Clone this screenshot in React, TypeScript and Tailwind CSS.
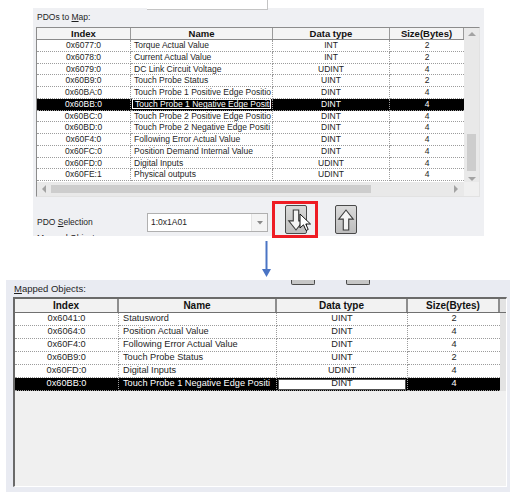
import React from 'react';

type Obj = { index: string; name: string; type: string; size: string };

const pdos: Obj[] = [
  { index: '0x6077:0', name: 'Torque Actual Value', type: 'INT', size: '2' },
  { index: '0x6078:0', name: 'Current Actual Value', type: 'INT', size: '2' },
  { index: '0x6079:0', name: 'DC Link Circuit Voltage', type: 'UDINT', size: '4' },
  { index: '0x60B9:0', name: 'Touch Probe Status', type: 'UINT', size: '2' },
  { index: '0x60BA:0', name: 'Touch Probe 1 Positive Edge Positio', type: 'DINT', size: '4' },
  { index: '0x60BB:0', name: 'Touch Probe 1 Negative Edge Positi', type: 'DINT', size: '4' },
  { index: '0x60BC:0', name: 'Touch Probe 2 Positive Edge Positio', type: 'DINT', size: '4' },
  { index: '0x60BD:0', name: 'Touch Probe 2 Negative Edge Positi', type: 'DINT', size: '4' },
  { index: '0x60F4:0', name: 'Following Error Actual Value', type: 'DINT', size: '4' },
  { index: '0x60FC:0', name: 'Position Demand Internal Value', type: 'DINT', size: '4' },
  { index: '0x60FD:0', name: 'Digital Inputs', type: 'UDINT', size: '4' },
  { index: '0x60FE:1', name: 'Physical outputs', type: 'UDINT', size: '4' },
];

const mapped: Obj[] = [
  { index: '0x6041:0', name: 'Statusword', type: 'UINT', size: '2' },
  { index: '0x6064:0', name: 'Position Actual Value', type: 'DINT', size: '4' },
  { index: '0x60F4:0', name: 'Following Error Actual Value', type: 'DINT', size: '4' },
  { index: '0x60B9:0', name: 'Touch Probe Status', type: 'UINT', size: '2' },
  { index: '0x60FD:0', name: 'Digital Inputs', type: 'UDINT', size: '4' },
  { index: '0x60BB:0', name: 'Touch Probe 1 Negative Edge Positi', type: 'DINT', size: '4' },
];

function Tri({ dir, className }: { dir: 'up' | 'down' | 'left' | 'right'; className?: string }) {
  const pts = {
    up: '0,5 4,1 8,5',
    down: '0,1 4,5 8,1',
    left: '5,0 1,4 5,8',
    right: '1,0 5,4 1,8',
  }[dir];
  const wide = dir === 'up' || dir === 'down';
  return (
    <svg className={className} width={wide ? 8 : 6} height={wide ? 6 : 8} viewBox={wide ? '0 0 8 6' : '0 0 6 8'}>
      <polygon points={pts} fill="#a3a3a3" />
    </svg>
  );
}

function ArrowButton({ dir }: { dir: 'up' | 'down' }) {
  const d =
    dir === 'down'
      ? 'M8 3 H14 V15 H19 L11 25 L3 15 H8 Z'
      : 'M8 25 H14 V13 H19 L11 3 L3 13 H8 Z';
  return (
    <div className="w-[22px] h-[29px] rounded-[2px] border border-[#4a4a4a] bg-gradient-to-b from-[#dadada] to-[#bdbdbd] flex items-center justify-center">
      <svg width="22" height="28" viewBox="0 0 22 28">
        <path d={d} fill="#f4f4f4" stroke="#3a3a3a" strokeWidth="1.2" strokeLinejoin="miter" />
      </svg>
    </div>
  );
}

function TopTable() {
  const w = ['w-[94px]', 'w-[142px]', 'w-[117px]', 'w-[74px]'];
  return (
    <div className="ml-[3px] w-[444px] h-[170px] border border-[#8c8c8c] border-r-[#e2e2e2] border-b-[#e2e2e2] bg-white flex flex-col">
      <div className="flex h-[154px]">
        <div className="flex flex-col w-[427px]">
          <div className="flex h-[12px] bg-[#f4f4f4] border-b border-[#8a8a8a] text-[9.5px] font-bold text-[#111]">
            {['Index', 'Name', 'Data type', 'Size(Bytes)'].map((h, i) => (
              <div key={h} className={`${w[i]} border-r border-[#9a9a9a] flex items-center justify-center leading-none`}>
                {h}
              </div>
            ))}
          </div>
          {pdos.map((r) => {
            const sel = r.index === '0x60BB:0';
            const txt = sel ? 'text-white bg-black' : 'text-[#1e1e1e] bg-white';
            return (
              <div key={r.index} className={`flex h-[11.75px] text-[8.5px] leading-none ${txt}`}>
                <div className={`${w[0]} border-r border-b border-dotted border-[#9c9c9c] flex items-center justify-center`}>{r.index}</div>
                <div className={`${w[1]} border-r border-b border-dotted border-[#9c9c9c] flex items-center whitespace-nowrap`}>
                  {sel ? (
                    <span className="ml-[1px] h-[10px] w-[139px] border border-white flex items-center pl-[2px]">{r.name}</span>
                  ) : (
                    <span className="pl-[3px]">{r.name}</span>
                  )}
                </div>
                <div className={`${w[2]} border-r border-b border-dotted border-[#9c9c9c] flex items-center justify-center`}>{r.type}</div>
                <div className={`${w[3]} border-b border-dotted border-[#9c9c9c] flex items-center justify-center`}>{r.size}</div>
              </div>
            );
          })}
        </div>
        <div className="w-[15px] bg-[#e9e9e9] flex flex-col items-center">
          <Tri dir="up" className="mt-[3px]" />
          <div className="mt-[97px] w-[9px] h-[37px] bg-[#cdcdcd]" />
          <Tri dir="down" className="mt-[5px]" />
        </div>
      </div>
      <div className="flex h-[14px]">
        <div className="w-[427px] bg-[#e9e9e9] flex items-center">
          <Tri dir="left" className="ml-[4px]" />
          <div className="ml-[4px] w-[320px] h-[8px] bg-[#cdcdcd]" />
          <Tri dir="right" className="ml-auto mr-[5px]" />
        </div>
        <div className="w-[15px] bg-[#f0f0f0]" />
      </div>
    </div>
  );
}

function BottomTable() {
  const w = ['w-[104px]', 'w-[158px]', 'w-[131px]', 'w-[92px]'];
  return (
    <div className="ml-[7px] w-[494px] h-[190px] border-l-2 border-t-2 border-r border-b border-l-[#6a6a6a] border-t-[#6a6a6a] border-r-white border-b-white bg-[#f0f0f0] flex flex-col">
      <div className="flex h-[14px] bg-[#f2f2f2] border-b border-[#707070] text-[10px] font-bold text-[#111]">
        {['Index', 'Name', 'Data type', 'Size(Bytes)'].map((h, i) => (
          <div key={h} className={`${w[i]} border-r-2 border-r-[#8e8e8e] flex items-center justify-center leading-none`}>
            {h}
          </div>
        ))}
        <div className="flex-1 bg-[#e3e3e3]" />
      </div>
      {mapped.map((r) => {
        const sel = r.index === '0x60BB:0';
        const txt = sel ? 'text-white bg-black' : 'text-[#1e1e1e] bg-white';
        return (
          <div key={r.index} className="flex h-[13px] text-[9.2px] leading-none">
            <div className={`flex ${txt}`}>
              <div className={`${w[0]} border-r border-b border-dotted border-[#9c9c9c] flex items-center justify-center`}>{r.index}</div>
              <div className={`${w[1]} border-r border-b border-dotted border-[#9c9c9c] flex items-center whitespace-nowrap pl-[4px]`}>
                {r.name}
              </div>
              <div className={`${w[2]} border-r border-b border-dotted border-[#9c9c9c] flex items-center justify-center`}>
                {sel ? (
                  <span className="w-[128px] h-[11px] bg-white border border-[#505050] text-[#1e1e1e] flex items-center justify-center">{r.type}</span>
                ) : (
                  r.type
                )}
              </div>
              <div className={`${w[3]} border-b border-dotted border-[#9c9c9c] flex items-center justify-center`}>{r.size}</div>
            </div>
            <div className="flex-1 bg-[#e3e3e3]" />
          </div>
        );
      })}
      <div className="flex-1" />
    </div>
  );
}

export default function App() {
  return (
    <div className="w-[517px] h-[497px] bg-white relative overflow-hidden font-['Liberation_Sans',Arial,sans-serif] text-[#1e1e1e]">
      {/* cut-off field above the upper panel */}
      <div className="absolute left-[147px] top-0 w-[121px] h-[10px] bg-white border-b border-r border-[#c4c4c4] z-10" />

      {/* upper panel: PDOs to map */}
      <div className="ml-[33px] mt-[8px] w-[451px] h-[228px] bg-[#eff0f3] overflow-hidden">
        <div className="h-[19px] pl-[4px] pt-[4px] text-[8.5px] leading-[11px]">
          PDOs to <span className="underline">M</span>ap:
        </div>
        <TopTable />
        <div className="flex items-start h-[36px]">
          <div className="mt-[16px] h-[19px] flex items-center">
            <div className="w-[114px] pl-[4px] text-[8.5px]">
              PDO <span className="underline">S</span>election
            </div>
            <div className="w-[121px] h-[19px] bg-white border border-[#b0b0b0] flex items-center">
              <span className="pl-[3px] text-[8.5px] flex-1">1:0x1A01</span>
              <div className="w-[16px] h-full border-l border-[#e4e4e4] bg-[#f4f4f4] flex items-center justify-center">
                <svg width="6" height="4" viewBox="0 0 6 4">
                  <polygon points="0,0 6,0 3,3.5" fill="#8a8a8a" />
                </svg>
              </div>
            </div>
          </div>
          <div className="ml-[17px] mt-[8px]">
            <ArrowButton dir="down" />
          </div>
          <div className="ml-[28px] mt-[8px]">
            <ArrowButton dir="up" />
          </div>
        </div>
        <div className="pl-[4px] text-[8.5px] leading-[11px]">
          <span className="underline">M</span>apped Objects:
        </div>
      </div>

      {/* annotation: red highlight and mouse cursor */}
      <div className="absolute left-[272px] top-[201px] w-[46px] h-[37px] border-[3px] border-[#ee1c24]" />
      <svg className="absolute left-[299px] top-[213px]" width="13" height="19" viewBox="0 0 13 19">
        <path d="M1 1 L1 15 L4.5 11.8 L7 17.5 L9.2 16.5 L6.8 11 L11.5 11 Z" fill="#fff" stroke="#111" strokeWidth="1" strokeLinejoin="round" />
      </svg>

      {/* blue flow arrow */}
      <svg className="absolute left-[261px] top-[241px]" width="11" height="38" viewBox="0 0 11 38">
        <line x1="5.5" y1="0" x2="5.5" y2="29" stroke="#4a74c4" strokeWidth="2" />
        <polygon points="1,28 10,28 5.5,36" fill="#4a74c4" />
      </svg>

      {/* lower panel: mapped objects */}
      <div className="ml-[6px] mt-[44px] w-[504px] h-[212px] bg-[#e9ebf2]">
        <div className="flex items-start h-[17px]">
          <div className="w-[285px] pl-[8px] pt-[3px] text-[9.5px] leading-[11px]">
            <span className="underline">M</span>apped Objects:
          </div>
          <div className="w-[24px] h-[5px] bg-[#c6c6c6] border-x border-b border-[#4a4a4a] rounded-b-[2px]" />
          <div className="ml-[31px] w-[24px] h-[5px] bg-[#c6c6c6] border-x border-b border-[#4a4a4a] rounded-b-[2px]" />
        </div>
        <BottomTable />
      </div>
    </div>
  );
}
